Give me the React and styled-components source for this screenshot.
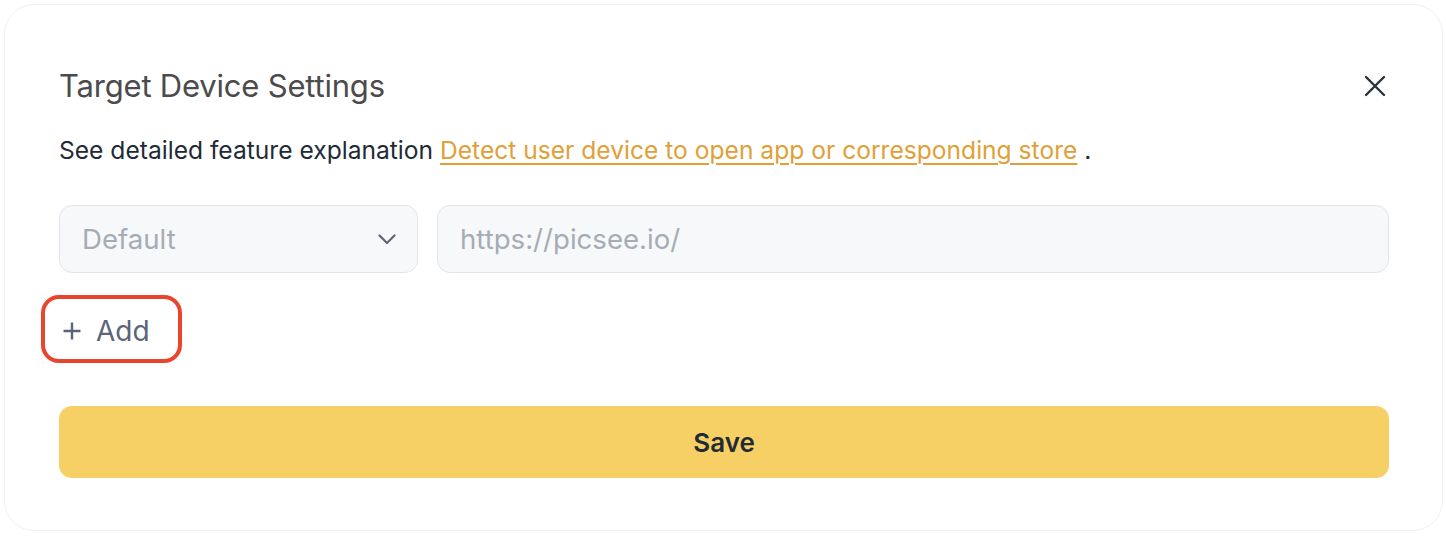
import React from "react";
import styled, { createGlobalStyle } from "styled-components";

const GlobalStyle = createGlobalStyle`
  html, body {
    margin: 0;
    padding: 0;
    background: #ffffff;
  }
  body {
    font-family: Inter, "Noto Sans", "Liberation Sans", sans-serif;
  }
  * {
    box-sizing: border-box;
  }
`;

const Page = styled.div`
  padding: 4px 3px 4px 4px;
`;

const Card = styled.div`
  width: 1439px;
  height: 527px;
  background: #ffffff;
  border: 1px solid #f1f1f1;
  border-radius: 30px;
  padding: 61px 53px 0 54px;
  display: flex;
  flex-direction: column;
`;

const Header = styled.div`
  display: flex;
  align-items: center;
  justify-content: space-between;
  height: 40px;
`;

const Title = styled.h2`
  margin: 0;
  font-size: 31px;
  line-height: 40px;
  font-weight: 400;
  color: #4b4b4d;
  letter-spacing: -0.2px;
`;

const CloseButton = styled.button`
  border: none;
  background: none;
  padding: 0;
  margin-right: 2px;
  width: 24px;
  height: 24px;
  display: flex;
  align-items: center;
  justify-content: center;
  color: #2b323c;
  cursor: pointer;
`;

const Description = styled.p`
  margin: 28px 0 0;
  font-size: 24.6px;
  line-height: 32px;
  color: #222a35;
`;

const Link = styled.a`
  color: #e1a037;
  text-decoration: underline;
  text-underline-offset: 4px;
  text-decoration-thickness: 2px;
`;

const Row = styled.div`
  display: flex;
  gap: 19px;
  margin-top: 39px;
`;

const Field = styled.div`
  height: 68px;
  width: ${(p) => p.$width || "auto"};
  flex: ${(p) => (p.$grow ? 1 : "none")};
  background: #f7f8fa;
  border: 1.5px solid #e2e5ea;
  border-radius: 13px;
  display: flex;
  align-items: center;
  justify-content: space-between;
  padding: 0 21px 0 22px;
  font-size: 27.6px;
  color: #a6acb6;
`;

const AddButton = styled.button`
  align-self: flex-start;
  margin: 22px 0 0 -18px;
  height: 68px;
  width: 141px;
  border: 4px solid #e9452c;
  border-radius: 18px;
  background: #ffffff;
  display: flex;
  align-items: center;
  gap: 15px;
  padding: 3px 0 0 18px;
  font-family: inherit;
  font-size: 28px;
  color: #5b6478;
  cursor: pointer;
`;

const SaveButton = styled.button`
  margin-top: 43px;
  height: 72px;
  width: 100%;
  border: none;
  border-radius: 13px;
  background: #f7d065;
  font-family: inherit;
  font-size: 26px;
  font-weight: 600;
  color: #212a35;
  cursor: pointer;
`;

const CloseIcon = () => (
  <svg width="22" height="22" viewBox="0 0 22 22" fill="none">
    <path
      d="M2 2L20 20M20 2L2 20"
      stroke="currentColor"
      strokeWidth="2.4"
      strokeLinecap="round"
    />
  </svg>
);

const Chevron = () => (
  <svg width="18" height="11" viewBox="0 0 18 11" fill="none">
    <path
      d="M1.5 1.5L9 9L16.5 1.5"
      stroke="#5e6676"
      strokeWidth="2.2"
      strokeLinecap="round"
      strokeLinejoin="round"
    />
  </svg>
);

const PlusIcon = () => (
  <svg width="18" height="18" viewBox="0 0 18 18" fill="none">
    <path d="M9 0.5V17.5M0.5 9H17.5" stroke="currentColor" strokeWidth="2.4" />
  </svg>
);

export default function App() {
  return (
    <>
      <GlobalStyle />
      <Page>
        <Card>
          <Header>
            <Title>Target Device Settings</Title>
            <CloseButton aria-label="Close">
              <CloseIcon />
            </CloseButton>
          </Header>
          <Description>
            See detailed feature explanation{" "}
            <Link href="#">Detect user device to open app or corresponding store</Link> .
          </Description>
          <Row>
            <Field $width="359px">
              <span>Default</span>
              <Chevron />
            </Field>
            <Field $grow>
              <span>https://picsee.io/</span>
            </Field>
          </Row>
          <AddButton>
            <PlusIcon />
            <span>Add</span>
          </AddButton>
          <SaveButton>Save</SaveButton>
        </Card>
      </Page>
    </>
  );
}
